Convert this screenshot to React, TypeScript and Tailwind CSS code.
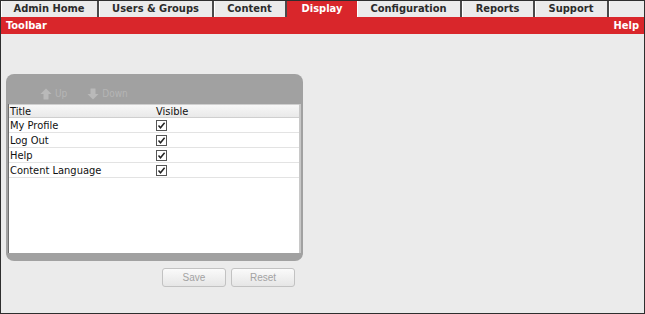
import React from "react";

const tabs = [
  { label: "Admin Home", w: 98 },
  { label: "Users & Groups", w: 115 },
  { label: "Content", w: 73 },
  { label: "Display", w: 70, active: true },
  { label: "Configuration", w: 105 },
  { label: "Reports", w: 73 },
  { label: "Support", w: 74 },
];

const rows = ["My Profile", "Log Out", "Help", "Content Language"];

function Arrow({ down }: { down?: boolean }) {
  return (
    <svg width="12" height="12" viewBox="0 0 12 12" className={down ? "rotate-180" : ""}>
      <path d="M6 0.5 L11.5 6 L8.5 6 L8.5 11.5 L3.5 11.5 L3.5 6 L0.5 6 Z" fill="#b9b9b9" />
    </svg>
  );
}

function Check() {
  return (
    <span className="flex h-[11px] w-[11px] items-center justify-center border border-[#555] bg-white">
      <svg width="9" height="9" viewBox="0 0 9 9">
        <path d="M1.5 4.5 L3.5 6.8 L7.6 1.8" fill="none" stroke="#222" strokeWidth="1.5" />
      </svg>
    </span>
  );
}

export default function App() {
  return (
    <div
      className="h-[314px] w-[645px] overflow-hidden border border-[#2e2e2e] bg-[#ebebeb]"
      style={{ fontFamily: '"DejaVu Sans Condensed", "DejaVu Sans", sans-serif' }}
    >
      {/* tabs */}
      <div className="flex h-[16px]">
        {tabs.map((t) => (
          <div
            key={t.label}
            style={{ width: t.w }}
            className={
              t.active
                ? "flex items-center justify-center bg-[#d9262b] pt-[1px] text-[11px] font-bold text-white"
                : "flex items-center justify-center border-r-2 border-r-[#4a4a4a] bg-[#ebebeb] pt-[1px] text-[11px] font-bold text-[#2b2b2b] shadow-[inset_1px_0_0_#fff]"
            }
          >
            {t.label}
          </div>
        ))}
        <div className="flex-1 bg-[#ebebeb] shadow-[inset_1px_0_0_#fff]" />
      </div>
      <div className="flex h-[17px] items-center justify-between bg-[#d9262b] px-[5px] pt-[1px] text-[11px] font-bold text-white">
        <span>Toolbar</span>
        <span>Help</span>
      </div>

      <div className="ml-[5px] mt-[40px] w-[297px] rounded-[8px] bg-[#a1a1a1] px-[2px] pb-[8px]">
        <div className="flex h-[30px] items-end gap-[20px] pb-[3px] pl-[32px] text-[10px] text-[#b5b5b5]">
          <span className="flex items-center gap-[3px]">
            <Arrow /> Up
          </span>
          <span className="flex items-center gap-[3px]">
            <Arrow down /> Down
          </span>
        </div>
        <div className="h-[149px] border-l border-l-[#6e6e6e] border-r-2 border-r-[#c8c8c8] bg-white text-[11px] text-[#111]">
          <div className="flex h-[14px] items-center border-t border-b border-[#cfcfcf] bg-gradient-to-b from-[#f7f7f7] to-[#e9e9e9] leading-none">
            <span className="w-[147px] pl-[1px]">Title</span>
            <span>Visible</span>
          </div>
          {rows.map((r) => (
            <div key={r} className="flex h-[15px] items-center border-b border-[#e3e3e3] leading-none">
              <span className="w-[147px] pl-[1px]">{r}</span>
              <Check />
            </div>
          ))}
        </div>
      </div>

      <div className="ml-[161px] mt-[7px] flex gap-[5px]">
        <button className="h-[19px] w-[64px] rounded-[3px] border border-[#c2c2c2] bg-gradient-to-b from-[#fafafa] to-[#e6e6e6] text-[10px] text-[#a3a3a3]" style={{ fontFamily: '"Liberation Sans", Arial, sans-serif' }}>
          Save
        </button>
        <button className="h-[19px] w-[64px] rounded-[3px] border border-[#c2c2c2] bg-gradient-to-b from-[#fafafa] to-[#e6e6e6] text-[10px] text-[#a3a3a3]" style={{ fontFamily: '"Liberation Sans", Arial, sans-serif' }}>
          Reset
        </button>
      </div>
    </div>
  );
}
